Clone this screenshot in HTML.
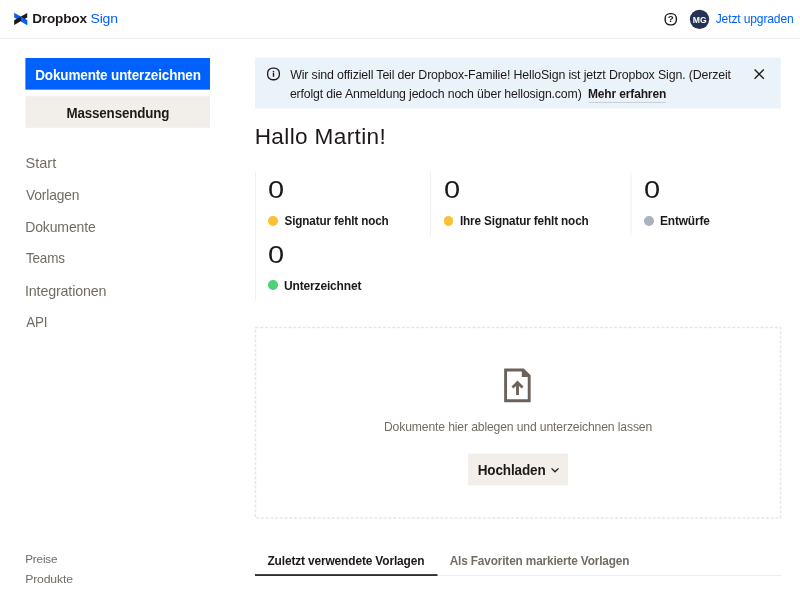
<!DOCTYPE html>
<html lang="de">
<head>
<meta charset="utf-8">
<title>Dropbox Sign</title>
<style>
*{box-sizing:border-box;margin:0;padding:0}
html,body{width:800px;height:610px;overflow:hidden;background:#fff}
body{font-family:"Liberation Sans",sans-serif;color:#1e1919;position:relative;will-change:transform}
a{text-decoration:none;cursor:pointer}
h1{font-weight:400}
.abs{position:absolute;white-space:nowrap;line-height:normal}
.t{transform-origin:0 0}
.num{font-size:23.2px;transform-origin:0 0;transform:scaleX(1.25);color:#1e1919}
.dot{width:9.7px;height:9.7px;border-radius:50%}
</style>
</head>
<body>
<!-- flat background shapes: header rule, buttons, banner, separators, tab rules -->
<svg class="abs" style="left:0;top:0" width="800" height="610" viewBox="0 0 800 610" aria-hidden="true">
  <rect x="0" y="37.9" width="800" height="0.9" fill="#efedea"/>
  <rect x="25.4" y="58" width="184.6" height="31.65" fill="#0061fe"/>
  <rect x="25.4" y="96.2" width="184.6" height="31.6" fill="#f2efeb"/>
  <rect x="255" y="57.5" width="525.9" height="50.9" fill="#ebf3fa"/>
  <rect x="588.6" y="101.9" width="77.2" height="1" fill="#c9cccf"/>
  <rect x="255.05" y="172.2" width="0.9" height="128.6" fill="#f1efec"/>
  <rect x="430.05" y="172.2" width="0.9" height="64.2" fill="#f1efec"/>
  <rect x="630.55" y="172.2" width="0.9" height="64.2" fill="#f1efec"/>
  <rect x="468.1" y="453.6" width="100" height="31.7" fill="#f2efeb"/>
  <rect x="255" y="575" width="526.4" height="0.9" fill="#efedea"/>
  <rect x="255" y="574.2" width="182.5" height="1.7" fill="#1e1919"/>
</svg>

<header>
<svg class="abs" style="left:0;top:0" width="40" height="38" viewBox="0 0 40 38" aria-hidden="true">
  <path d="M14.2 12.8 L27.2 20.2 L27.2 24.9 L14.2 17.5 Z" fill="#0061fe"/>
  <path d="M14.2 20.3 L27.2 12.9 L27.2 17.5 L14.2 24.9 Z" fill="#1e1919"/>
  <path d="M20.9 16.6 L27.2 20.2 L27.2 24.9 L20.9 21.3 Z" fill="#0061fe"/>
</svg>
<svg class="abs" style="left:660px;top:9px" width="20" height="20" viewBox="0 0 20 20">
  <rect x="5.15" y="4.65" width="11.2" height="11.2" rx="4.8" ry="4.8" fill="none" stroke="#1e1919" stroke-width="1.4"/>
  <text x="10.75" y="13.2" font-family="Liberation Sans, sans-serif" font-size="9.8" font-weight="700" text-anchor="middle" fill="#1e1919">?</text>
</svg>
<svg class="abs" style="left:685px;top:5px" width="30" height="30" viewBox="0 0 30 30" aria-hidden="true"><circle cx="14.5" cy="14.35" r="9.65" fill="#233153"/></svg>
<div class="abs" style="left:689.8px;top:9.6px;width:19.4px;height:19.4px;line-height:19.4px;text-align:center;font-size:9.8px;font-weight:700;color:#fff;transform:scaleX(0.88)">MG</div>
<div id="lg1" class="abs t" style="left:32.00px;top:11px;font-size:12.8px;font-weight:700;color:#1e1919;letter-spacing:-0.150px;transform:translateX(0.20px) scaleX(1.0597)">Dropbox</div>
<div id="lg2" class="abs t" style="left:90.00px;top:11px;font-size:13.4px;font-weight:400;color:#0061fe;letter-spacing:-0.150px;transform:translateX(0.45px) scaleX(1.0457)">Sign</div>
<a id="upg" class="abs t" style="left:715.00px;top:11px;font-size:13.2px;font-weight:400;color:#0061fe;letter-spacing:-0.150px;transform:translateX(0.70px) scaleX(0.9147)">Jetzt upgraden</a>
</header>

<nav>
<span id="b1" class="abs t" style="left:35.00px;top:67px;font-size:14.5px;font-weight:700;color:#ffffff;letter-spacing:-0.150px;transform:translateX(0.20px) scaleX(0.9314)">Dokumente unterzeichnen</span>
<span id="b2" class="abs t" style="left:66.00px;top:105px;font-size:14.5px;font-weight:700;color:#1e1919;letter-spacing:-0.150px;transform:translateX(0.45px) scaleX(0.9215)">Massensendung</span>
<a id="n1" class="abs t" style="left:25.45px;top:155px;font-size:14.5px;font-weight:400;color:#736c64;letter-spacing:0.030px">Start</a>
<a id="n2" class="abs t" style="left:25.00px;top:187px;font-size:14.5px;font-weight:400;color:#736c64;letter-spacing:-0.150px;transform:translateX(0.95px) scaleX(0.9527)">Vorlagen</a>
<a id="n3" class="abs t" style="left:25.00px;top:219px;font-size:14.5px;font-weight:400;color:#736c64;letter-spacing:-0.150px;transform:translateX(0.20px) scaleX(0.9669)">Dokumente</a>
<a id="n4" class="abs t" style="left:25.00px;top:250px;font-size:14.5px;font-weight:400;color:#736c64;letter-spacing:-0.150px;transform:translateX(0.95px) scaleX(0.9267)">Teams</a>
<a id="n5" class="abs t" style="left:24.00px;top:283px;font-size:14.5px;font-weight:400;color:#736c64;letter-spacing:-0.150px;transform:translateX(0.95px) scaleX(0.9845)">Integrationen</a>
<a id="n6" class="abs t" style="left:26.00px;top:314px;font-size:14.5px;font-weight:400;color:#736c64;letter-spacing:-0.150px;transform:translateX(0.20px) scaleX(0.9221)">API</a>
<a id="f1" class="abs t" style="left:25.00px;top:552px;font-size:11.6px;font-weight:400;color:#736c64;letter-spacing:-0.150px;transform:translateX(0.20px) scaleX(1.0057)">Preise</a>
<a id="f2" class="abs t" style="left:25.00px;top:572px;font-size:11.6px;font-weight:400;color:#736c64;letter-spacing:-0.150px;transform:translateX(0.20px) scaleX(1.0538)">Produkte</a>
</nav>

<main>
<!-- banner -->
<svg class="abs" style="left:264px;top:65px" width="20" height="20" viewBox="0 0 20 20" aria-hidden="true">
  <rect x="3.65" y="3.05" width="11.7" height="11.7" rx="5" ry="5" fill="none" stroke="#1e1919" stroke-width="1.3"/>
  <rect x="8.8" y="7.75" width="1.4" height="4" fill="#1e1919"/>
  <rect x="8.8" y="5.9" width="1.4" height="1.35" fill="#1e1919"/>
</svg>
<svg class="abs" style="left:749px;top:64px" width="20" height="20" viewBox="0 0 20 20" aria-hidden="true">
  <path d="M5.6 5.6 L14.8 14.8 M14.8 5.6 L5.6 14.8" stroke="#1e1919" stroke-width="1.35" fill="none"/>
</svg>

<!-- stats -->
<div class="abs num" id="z1" style="left:267.8px;top:177px">0</div>
<div class="abs num" id="z2" style="left:443.6px;top:177px">0</div>
<div class="abs num" id="z3" style="left:644px;top:177px">0</div>
<div class="abs num" id="z4" style="left:267.5px;top:242px">0</div>
<div class="abs dot" style="left:268px;top:216px;background:#fbc132"></div>
<div class="abs dot" style="left:443.7px;top:216px;background:#fbc132"></div>
<div class="abs dot" style="left:644.1px;top:216px;background:#a9b4bf"></div>
<div class="abs dot" style="left:268px;top:280.4px;background:#4fd273"></div>

<!-- drop zone -->
<svg class="abs" style="left:250px;top:322px" width="540" height="200" viewBox="0 0 540 200" aria-hidden="true">
  <rect x="5.5" y="5.5" width="525" height="190.4" fill="none" stroke="#eae7e1" stroke-width="1.5" stroke-dasharray="3 1.72"/>
</svg>
<svg class="abs" style="left:500px;top:364px" width="36" height="42" viewBox="0 0 36 42" aria-hidden="true">
  <path d="M5.6 5.95 H23.2 L29.2 11.95 V36.75 H5.6 Z" fill="none" stroke="#6b635b" stroke-width="2.9" stroke-linejoin="miter"/>
  <path d="M21.8 5.95 V13 H29.2 V11.95 L23.2 5.95 Z" fill="#6b635b"/>
  <path d="M17.5 16.6 L11.5 22.6 L13.4 24.5 L16.05 21.9 V30.9 H18.95 V21.9 L21.6 24.5 L23.5 22.6 Z" fill="#6b635b"/>
</svg>
<svg class="abs" style="left:549px;top:464px" width="12" height="12" viewBox="0 0 12 12" aria-hidden="true">
  <path d="M2.5 4.4 L6 7.8 L9.5 4.4" stroke="#1e1919" stroke-width="1.3" fill="none"/>
</svg>

<div id="bt1" class="abs t" style="left:290.00px;top:68px;font-size:12.7px;font-weight:400;color:#1e1919;letter-spacing:-0.150px;transform:translateX(0.20px) scaleX(0.9752)">Wir sind offiziell Teil der Dropbox-Familie! HelloSign ist jetzt Dropbox Sign. (Derzeit</div>
<div id="bt2" class="abs t" style="left:289.00px;top:87px;font-size:12.7px;font-weight:400;color:#1e1919;letter-spacing:-0.150px;transform:translateX(0.90px) scaleX(0.9692)">erfolgt die Anmeldung jedoch noch über hellosign.com)</div>
<a id="bt3" class="abs t" style="left:587.00px;top:87px;font-size:12.7px;font-weight:700;color:#1e1919;letter-spacing:-0.150px;transform:translateX(0.95px) scaleX(0.9455)">Mehr erfahren</a>
<h1 id="hello" class="abs t" style="left:254.70px;top:124px;font-size:22.6px;font-weight:400;color:#1e1919;letter-spacing:0.349px">Hallo Martin!</h1>
<div id="l1" class="abs t" style="left:284.00px;top:214px;font-size:12.5px;font-weight:700;color:#1e1919;letter-spacing:-0.150px;transform:translateX(0.45px) scaleX(0.9379)">Signatur fehlt noch</div>
<div id="l2" class="abs t" style="left:459.00px;top:214px;font-size:12.5px;font-weight:700;color:#1e1919;letter-spacing:-0.150px;transform:translateX(0.95px) scaleX(0.9412)">Ihre Signatur fehlt noch</div>
<div id="l3" class="abs t" style="left:659.00px;top:214px;font-size:12.5px;font-weight:700;color:#1e1919;letter-spacing:-0.150px;transform:translateX(0.95px) scaleX(0.9544)">Entwürfe</div>
<div id="l4" class="abs t" style="left:283.00px;top:279px;font-size:12.5px;font-weight:700;color:#1e1919;letter-spacing:-0.150px;transform:translateX(0.95px) scaleX(0.9588)">Unterzeichnet</div>
<div id="dt" class="abs t" style="left:383.00px;top:420px;font-size:12.6px;font-weight:400;color:#736c64;letter-spacing:-0.150px;transform:translateX(0.95px) scaleX(0.9673)">Dokumente hier ablegen und unterzeichnen lassen</div>
<span id="up" class="abs t" style="left:477.00px;top:462px;font-size:14.3px;font-weight:700;color:#1e1919;letter-spacing:-0.150px;transform:translateX(0.70px) scaleX(0.9466)">Hochladen</span>
<a id="t1" class="abs t" style="left:267.00px;top:554px;font-size:12.5px;font-weight:700;color:#1e1919;letter-spacing:-0.150px;transform:translateX(0.45px) scaleX(0.9537)">Zuletzt verwendete Vorlagen</a>
<a id="t2" class="abs t" style="left:449.00px;top:554px;font-size:12.5px;font-weight:700;color:#736c64;letter-spacing:-0.150px;transform:translateX(0.70px) scaleX(0.9446)">Als Favoriten markierte Vorlagen</a>
</main>
</body>
</html>
